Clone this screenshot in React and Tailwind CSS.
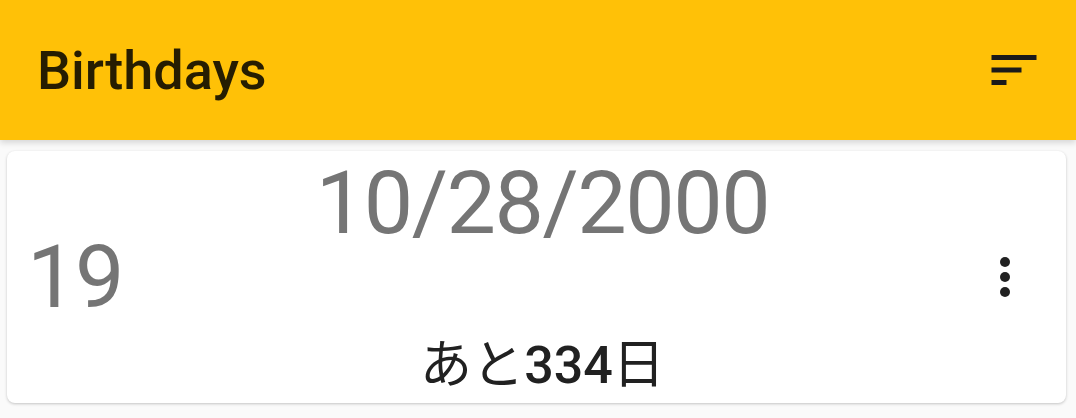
import React from "react";

// Birthdays list screen: app bar + one birthday card

const SortIcon = () => (
  <svg viewBox="0 0 24 24" className="w-[60px] h-[60px]" fill="currentColor">
    <path d="M3 18h6v-2H3v2zM3 6v2h18V6H3zm0 7h12v-2H3v2z" />
  </svg>
);

const MoreVertIcon = () => (
  <svg viewBox="0 0 24 24" className="w-[60px] h-[60px]" fill="currentColor">
    <circle cx="12" cy="6" r="2" />
    <circle cx="12" cy="12" r="2" />
    <circle cx="12" cy="18" r="2" />
  </svg>
);

const BirthdayCard = ({ age, date, daysLeft }) => (
  <div className="mt-[11px] ml-[7px] mr-[10px] h-[252px] flex items-stretch bg-white rounded-lg shadow-[0_1px_3px_rgba(0,0,0,0.22)]">
    <div className="flex items-center pl-[20px]">
      <span className="text-[88px] leading-[104px] tracking-[-1.5px] text-[#757575]">{age}</span>
    </div>
    <div className="flex-1 flex flex-col justify-between items-center">
      <span className="text-[88px] leading-[104px] tracking-[-1.5px] text-[#757575]">{date}</span>
      <span className="text-[52px] leading-[60px] pb-[7px] text-[#212121]">
        あと<span className="font-medium">{daysLeft}</span>日
      </span>
    </div>
    <div className="flex items-center pl-[13px] pr-[31px] text-[#212121]">
      <MoreVertIcon />
    </div>
  </div>
);

export default function App() {
  return (
    <div
      className="w-[1076px] h-[418px] bg-[#fafafa] overflow-hidden"
      style={{ fontFamily: 'Roboto, "Noto Sans CJK JP", sans-serif' }}
    >
      <header className="relative z-10 h-[140px] bg-[#FFC107] flex items-center justify-between pl-[37px] pr-[32px] shadow-[0_3px_6px_rgba(0,0,0,0.14)]">
        <h1 className="text-[54px] font-medium text-black/85">Birthdays</h1>
        <div className="text-[#1a1a1a]">
          <SortIcon />
        </div>
      </header>
      <BirthdayCard age="19" date="10/28/2000" daysLeft="334" />
    </div>
  );
}
